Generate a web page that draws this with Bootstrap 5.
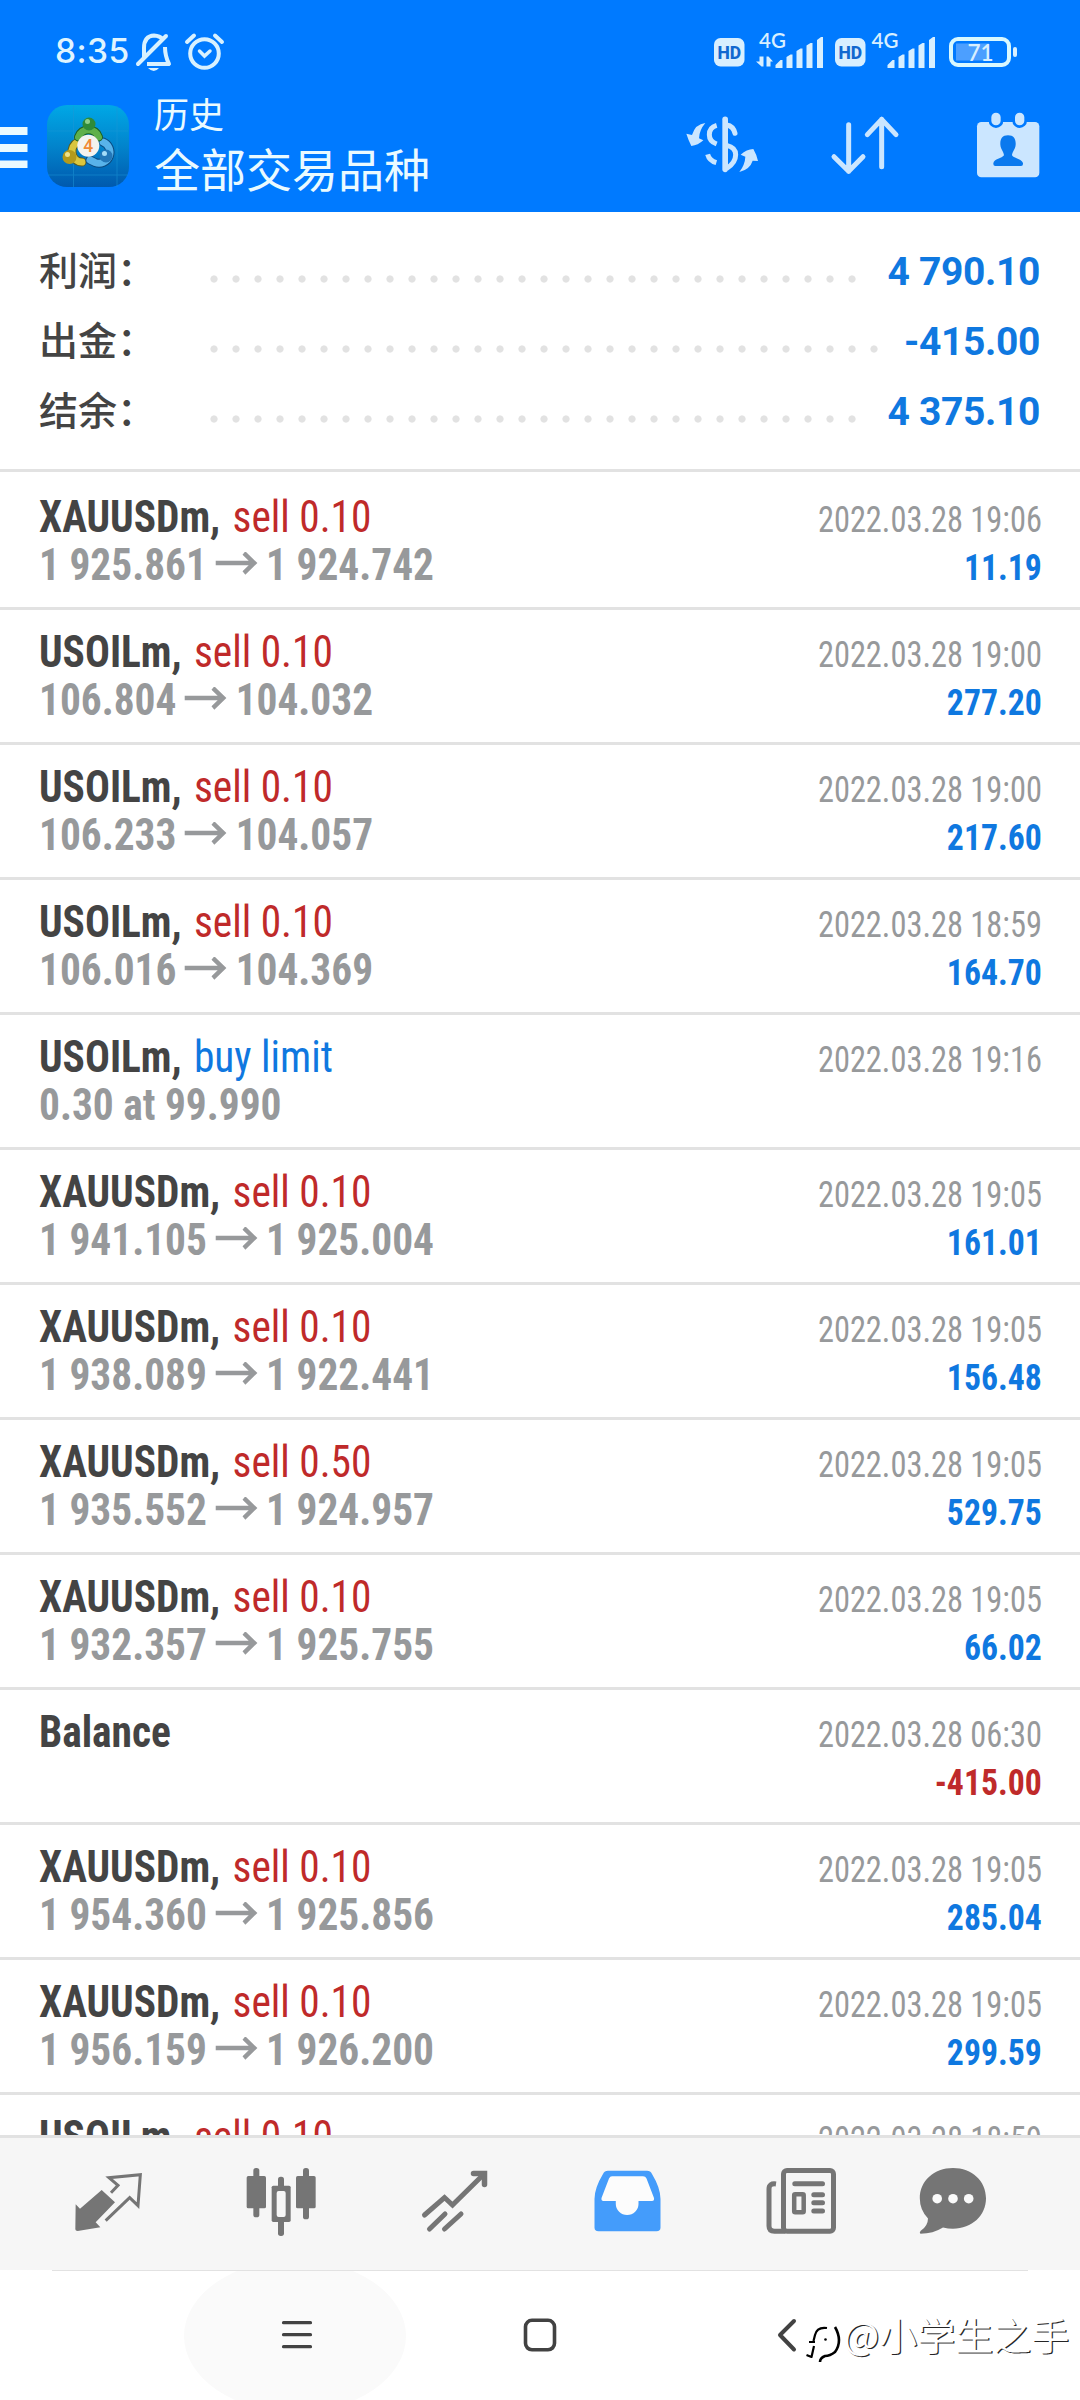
<!DOCTYPE html>
<html lang="zh-CN">
<head>
<meta charset="utf-8">
<meta name="viewport" content="width=device-width, initial-scale=1">
<title>历史</title>
<link href="https://cdn.jsdelivr.net/npm/bootstrap@5.3.0/dist/css/bootstrap.min.css" rel="stylesheet">
<style>
  body { font-family: "Roboto Condensed", Roboto, "Noto Sans CJK SC", sans-serif; background: #fff; }
  svg { display: block; flex: none; }
  .phone { width: 1080px; height: 2400px; }
  .topbar { height: 212px; background: #007aff; color: #eafaff; }
  .status { height: 88px; padding: 0 60px 0 55px; }
  .clock { font: 500 33.500px/1 Inter, sans-serif; color: #dff4ff; letter-spacing: .4px; width: 76px; margin-top: 35px; white-space: nowrap; }
  .appbar { height: 124px; }
  .titles { font-family: "Noto Sans CJK SC", sans-serif; margin: -3px 0 0 13px; font-weight: 400; }
  .title-sm { font-size: 35px; line-height: 56px; }
  .title-lg { font-size: 46px; line-height: 52px; }
  .summary { height: 260px; border-bottom: 3px solid #e2e2e2; padding: 23px 40px 0 39px; }
  .sum-row { height: 70px; }
  .sum-label { width: 163.5px; font: 500 39px/66px "Noto Sans CJK SC", sans-serif; color: #444; padding-bottom: 4px; }
  .leader { height: 8px; margin-top: 17px; margin-right: 24px;
    background: radial-gradient(circle at 11px 4px, #e2e2e2 3.2px, transparent 4px) 0 0 / 22px 8px repeat-x; }
  .sum-val { font: 700 39px/68px Roboto, sans-serif; letter-spacing: -.35px; color: #0f78e0; padding-top: 3px; }
  .deals { padding-top: 3px; }
  .deal { height: 135px; border-bottom: 3px solid #e2e2e2; padding: 18px 38px 0 39px; white-space: nowrap; }
  .deal-line { height: 48px; line-height: 48px; }
  .deal-main { font-size: 44px; transform: scaleX(.94); transform-origin: 0 0; }
  .deal-side { padding-top: 3px; font-size: 36px; }
  .deal-side > div { transform-origin: 100% 0; }
  .sym { font-weight: 700; color: #444; }
  .side { margin-left: 3px; }
  .c-sell { color: #bf2a2a; }
  .c-buy { color: #0f78e0; }
  .prices { font-weight: 700; color: #97999b; }
  .stamp { color: #97999b; transform: scaleX(.9); }
  .gain { font-weight: 700; transform: scaleX(.937); }
  .tabs { height: 135px; background: #f6f6f6; border-top: 3px solid #e2e2e2; padding-left: 22px; }
  .tab { width: 173px; }
  .tab:last-child { width: 131px; }
  .sysnav { height: 130px; background: #fff; }
</style>
</head>
<body>
<div class="phone d-flex flex-column overflow-hidden mx-auto">
  <header class="topbar flex-shrink-0">
    <div class="status d-flex">
      <span class="clock">8:35</span>
      <svg width="100" height="88" viewBox="131 0 100 88" fill="none" stroke="#d8f1ff" stroke-width="4">
        <path d="M144 57V48Q144 36 154 35.500Q160 36 162.500 39M165 47Q165 56 169 64H147" stroke-linejoin="round"/>
        <path d="M138 64L166 36" stroke-linecap="round"/>
        <path d="M148 68H159Q154 74 148 68Z" fill="#d8f1ff" stroke="none"/>
        <circle cx="204.500" cy="53.500" r="14.300"/>
        <path d="M187 42L194 35.500M222 42L215 35.500" stroke-linecap="round"/>
        <path d="M199.500 51L204.500 56L210 51" stroke-linecap="round" stroke-width="3.500"/>
      </svg>
      <svg class="ms-auto" width="310" height="88" viewBox="710 0 310 88" fill="#d8efff">
        <rect x="714" y="38" width="30.500" height="28.500" rx="6.500"/>
        <text x="729.300" y="58.500" text-anchor="middle" font-family="Roboto" font-weight="800" font-size="17.500" fill="#1268cf">HD</text>
        <text x="759" y="48" font-family="Lato" font-weight="600" font-size="20.500">4G</text>
        <path d="M759.500 56.500h4v10h-2l-5.500-5h3.500zM770.500 66.500h-4v-10h2l4.500 5h-2.500z"/>
        <path id="bars" d="M775.500 68v-3l5-5h2v8zM786.500 68V57l4-2.500h2V68zM796.500 68V51l4-2.500h2V68zM806.500 68V45.500l4-2.500h2V68zM817 68V40l4-3h2V68z"/>
        <rect x="835" y="38" width="30.500" height="28.500" rx="6.500"/>
        <text x="850.300" y="58.500" text-anchor="middle" font-family="Roboto" font-weight="800" font-size="17.500" fill="#1268cf">HD</text>
        <text x="871.500" y="48" font-family="Lato" font-weight="600" font-size="20.500">4G</text>
        <use href="#bars" x="112"/>
        <rect x="956" y="43.500" width="33" height="17" fill="#4c9fff"/>
        <rect x="951" y="39" width="58" height="26" rx="7" fill="none" stroke="#d8f8ff" stroke-width="4"/>
        <rect x="1013" y="47" width="4" height="10" rx="2"/>
        <text x="980.500" y="61" text-anchor="middle" font-family="Lato" font-weight="600" font-size="22.500">71</text>
      </svg>
    </div>
    <div class="appbar d-flex">
      <svg width="141" height="124" viewBox="0 88 141 124">
        <defs>
          <linearGradient id="tile" x1="0" y1="0" x2="0" y2="1"><stop offset="0" stop-color="#00a8e6"/><stop offset=".5" stop-color="#0284cc"/><stop offset="1" stop-color="#0059ae"/></linearGradient>
        </defs>
        <path d="M0 127h27.500v8H0zM0 144h27.500v8H0zM0 160.500h27.500v7.500H0z" fill="#eafaff"/>
        <rect x="47" y="105" width="82" height="82" rx="20" fill="url(#tile)"/>
        <path d="M73.500 106V187M117 106V187M48 131H128M48 175H128" stroke="#1d97d6" stroke-width="1" opacity=".5"/>
        <g fill="none" stroke-linecap="round">
          <path d="M78 142A10.500 10.500 0 0 0 82 162" stroke="#5b5c1c" stroke-width="9"/>
          <path d="M78 142A10.500 10.500 0 0 0 82 162" stroke="#d9c63e" stroke-width="7"/>
          <path d="M103 142A11 11 0 0 1 95 162.500L90 160" stroke="#0b4b80" stroke-width="9"/>
          <path d="M103 142A11 11 0 0 1 95 162.500L90 160" stroke="#58b3ea" stroke-width="7"/>
          <path d="M78.500 137A10.500 10.500 0 0 1 98.500 137" stroke="#1c5f22" stroke-width="9"/>
          <path d="M78.500 137A10.500 10.500 0 0 1 98.500 137" stroke="#5fb04a" stroke-width="7"/>
        </g>
        <circle cx="89" cy="124" r="6.500" fill="#2f8b38"/><circle cx="87.500" cy="121.500" r="2.500" fill="#8fd08a"/>
        <circle cx="69.500" cy="157" r="7" fill="#b39a1c"/><circle cx="67.500" cy="154.500" r="2.500" fill="#efe28a"/>
        <circle cx="106" cy="156" r="6.500" fill="#2377b8"/><circle cx="104.500" cy="153.500" r="2.500" fill="#a5dcf8"/>
        <circle cx="88.300" cy="145.700" r="11" fill="#f3f3ef"/>
        <text x="88.300" y="152" text-anchor="middle" font-family="Roboto" font-weight="500" font-size="17.500" fill="#f08a35">4</text>
      </svg>
      <div class="titles">
        <div class="title-sm">历史</div>
        <div class="title-lg">全部交易品种</div>
      </div>
      <svg class="ms-auto" width="100" height="124" viewBox="0 -36 300 372" fill="none" stroke="#cbe6ff" stroke-width="15">
        <path d="M135.500 58V208" stroke-width="17" stroke-linecap="round"/>
        <path d="M110 76Q88 82 88 104Q88 124 110 132"/>
        <path d="M140 75Q160 78 165 100" stroke-linecap="round"/>
        <path d="M140 136Q167 142 167 164Q167 188 140 205"/>
        <path d="M83 163Q88 182 109 188" stroke-linecap="butt"/>
        <g fill="#cbe6ff" stroke="none">
          <path d="M76 69Q46 72 36 105L19 101Q25 120 34 138Q54 136 70 121L57 115Q58 90 76 69Z"/>
          <path d="M178 216Q210 208 218 182L234 183Q230 164 220 147Q200 148 182 164L196 170Q195 194 178 216Z"/>
        </g>
      </svg>
      <svg width="190" height="124" viewBox="420 264 570 372" fill="none" stroke="#cbe6ff" stroke-width="15" stroke-linecap="round" stroke-linejoin="round">
        <path d="M626 374V514M582 470L626 514L669 470M725 500V358M682 404L725 358L768 404"/>
      </svg>
      <svg width="110" height="124" viewBox="990 264 330 372" fill="#cbe6ff">
        <rect x="1011" y="366" width="187" height="166" rx="13"/>
        <g stroke="#007aff" stroke-width="8"><rect x="1050" y="334" width="36" height="46" rx="18"/><rect x="1121" y="334" width="36" height="46" rx="18"/></g>
        <path d="M1104 406C1086 406 1080 418 1081 434C1082 448 1092 456 1092 466C1086 476 1062 476 1060 490V492Q1060 498 1066 498H1143Q1149 498 1149 492V490C1146 476 1122 476 1116 466C1116 456 1126 448 1127 434C1128 418 1122 406 1104 406Z" fill="#0a79ee"/>
      </svg>
    </div>
  </header>

  <section class="summary flex-shrink-0">
    <div class="sum-row d-flex align-items-center"><span class="sum-label">利润：</span><span class="leader flex-grow-1"></span><span class="sum-val">4 790.10</span></div>
    <div class="sum-row d-flex align-items-center"><span class="sum-label">出金：</span><span class="leader flex-grow-1"></span><span class="sum-val">-415.00</span></div>
    <div class="sum-row d-flex align-items-center"><span class="sum-label">结余：</span><span class="leader flex-grow-1"></span><span class="sum-val">4 375.10</span></div>
  </section>

  <main class="deals flex-grow-1 overflow-hidden" id="deals" style="min-height:0"></main>

  <nav class="tabs d-flex flex-shrink-0">
    <a class="tab d-flex justify-content-center" href="#" aria-label="行情">
      <svg width="80" height="132" viewBox="28 -36 240 396">
        <path d="M48 163L61 176L126 120L166 157L108 217L122 232L54 243Q47 243 47 238Z" fill="#757575"/>
        <path d="M138 212L210 143L235 167L242 74L148 83L175 106L154 128" fill="none" stroke="#757575" stroke-width="9"/>
      </svg>
    </a>
    <a class="tab d-flex justify-content-center" href="#" aria-label="图表">
      <svg width="80" height="132" viewBox="546 -36 240 396" fill="#757575">
        <rect x="580" y="54" width="18" height="148" rx="8"/><rect x="560" y="78" width="58" height="97" rx="5"/>
        <rect x="654" y="80" width="18" height="178" rx="8"/><rect x="635" y="107" width="57" height="109" rx="5"/><rect x="650" y="123" width="27" height="78" rx="6" fill="#f6f6f6"/>
        <rect x="729" y="54" width="18" height="154" rx="8"/><rect x="708" y="78" width="59" height="97" rx="5"/>
      </svg>
    </a>
    <a class="tab d-flex justify-content-center" href="#" aria-label="交易">
      <svg width="80" height="132" viewBox="414.500 2138 80 132" fill="none" stroke="#757575" stroke-width="5" stroke-linecap="round">
        <path d="M424 2215L444 2197.500L452 2205L483.500 2174"/>
        <path d="M473 2173.500H484V2184.500" stroke-width="5.500"/>
        <path d="M429 2229L444.500 2214M444 2229L460.500 2214"/>
      </svg>
    </a>
    <a class="tab d-flex justify-content-center" href="#" aria-label="历史">
      <svg width="80" height="132" viewBox="588 2138 80 132" fill="#449cfb">
        <path d="M608 2170.700H647Q650.500 2170.700 652 2174Q660.500 2188 660.500 2199V2227.500Q660.500 2231.300 656.500 2231.300H598.500Q594.500 2231.300 594.500 2227.500V2199Q594.500 2188 603 2174Q604.500 2170.700 608 2170.700Z"/>
        <path d="M612 2176.300Q610 2176.300 609 2178.500L601.500 2198Q601 2201 603.500 2201H615.800V2204A11.350 11 0 0 0 638.500 2204V2201H652Q654.500 2201 654 2198L646.500 2178.500Q645.500 2176.300 643 2176.300Z" fill="#fcfcfc"/>
      </svg>
    </a>
    <a class="tab d-flex justify-content-center" href="#" aria-label="新闻">
      <svg width="80" height="132" viewBox="760.500 2138 80 132" fill="none" stroke="#757575" stroke-width="5">
        <rect x="783" y="2170.500" width="50" height="60.700" rx="3.500"/>
        <path d="M775.500 2184Q768.500 2183 768.500 2189V2226Q768.500 2231.200 774 2231.200H785"/>
        <path d="M794.300 2183.700H822M813.300 2194.700H822M813.300 2202.700H822M813.300 2211H822" stroke-linecap="round"/>
        <rect x="793.700" y="2194.200" width="9.500" height="18" rx="1" stroke-width="4.500"/>
      </svg>
    </a>
    <a class="tab d-flex justify-content-center" href="#" aria-label="消息">
      <svg width="80" height="132" viewBox="913 2138 80 132" fill="#757575">
        <path d="M953 2168C972 2168 986 2181 986 2198.300S972 2228.700 953 2228.700Q948 2228.700 943 2227.500Q933 2233.700 920.500 2233.700Q919 2233 920.500 2231Q928 2226 928 2218.500Q919.800 2210 919.800 2198.300C919.800 2181 934 2168 953 2168Z"/>
        <g fill="#fafafa"><circle cx="937.200" cy="2198.700" r="4.800"/><circle cx="953" cy="2198.700" r="4.800"/><circle cx="968.700" cy="2198.700" r="4.800"/></g>
      </svg>
    </a>
  </nav>

  <footer class="sysnav flex-shrink-0">
    <svg width="1080" height="130" viewBox="0 2270 1080 130" fill="none" stroke="#424242" stroke-width="3.600" stroke-linecap="round" stroke-linejoin="round">
      <ellipse cx="295" cy="2336" rx="111" ry="76" fill="#fafafa" stroke="none"/>
      <path d="M52 2270.500H1028" stroke="#e2e2e2" stroke-width="1" stroke-linecap="butt"/>
      <path d="M283.500 2322.700H310.500M283.500 2334.700H310.500M283.500 2346.700H310.500" stroke-width="3.200"/>
      <rect x="525.500" y="2320.300" width="29" height="29.500" rx="6.500"/>
      <path d="M794 2321L780 2335L794 2349.500" stroke-width="4"/>
      <g stroke="none" font-family="Noto Sans CJK SC" font-size="38" font-weight="350">
        <text x="845" y="2351" fill="#000" opacity=".85">@小学生之手</text>
        <text x="843.800" y="2349.800" fill="#fff">@小学生之手</text>
      </g>
      <g stroke="#000" stroke-linecap="butt">
        <path d="M827 2328Q817 2326.500 815 2335L813.500 2341M809 2342H815M814 2346L811.500 2357L806.500 2355" stroke-width="2.200"/>
        <path d="M835 2327Q843 2341 835 2352Q830 2356 825 2356Q820 2358 820 2362" stroke-width="2.600"/>
        <circle cx="825.500" cy="2339.500" r="1.300" fill="#000" stroke="none"/>
      </g>
    </svg>
  </footer>
</div>
<script>
  // symbol, side label, price from, price to, time, result
  const deals = [
    ["XAUUSDm", "sell 0.10", "1 925.861", "1 924.742", "19:06", "11.19"],
    ["USOILm", "sell 0.10", "106.804", "104.032", "19:00", "277.20"],
    ["USOILm", "sell 0.10", "106.233", "104.057", "19:00", "217.60"],
    ["USOILm", "sell 0.10", "106.016", "104.369", "18:59", "164.70"],
    ["USOILm", "buy limit", "0.30 at 99.990", "", "19:16", ""],
    ["XAUUSDm", "sell 0.10", "1 941.105", "1 925.004", "19:05", "161.01"],
    ["XAUUSDm", "sell 0.10", "1 938.089", "1 922.441", "19:05", "156.48"],
    ["XAUUSDm", "sell 0.50", "1 935.552", "1 924.957", "19:05", "529.75"],
    ["XAUUSDm", "sell 0.10", "1 932.357", "1 925.755", "19:05", "66.02"],
    ["Balance", "", "", "", "06:30", "-415.00"],
    ["XAUUSDm", "sell 0.10", "1 954.360", "1 925.856", "19:05", "285.04"],
    ["XAUUSDm", "sell 0.10", "1 956.159", "1 926.200", "19:05", "299.59"],
    ["USOILm", "sell 0.10", "", "", "18:59", ""]
  ];
  const arrow = '<svg class="ms-2 me-2" width="47" height="26" viewBox="0 0 47 26" fill="none" stroke="#97999b" stroke-width="4.500"><path d="M1 11H43M31 1L42 11L31 21"/></svg>';
  document.getElementById("deals").innerHTML = deals.map(([sym, side, from, to, time, gain]) => `
    <div class="deal d-flex justify-content-between">
      <div class="deal-main">
        <div class="deal-line"><span class="sym">${sym}${side ? "," : ""}</span> <span class="side ${side[0] === "b" ? "c-buy" : "c-sell"}">${side}</span></div>
        <div class="deal-line prices d-flex align-items-center"><span>${from}</span>${to ? arrow + `<span>${to}</span>` : ""}</div>
      </div>
      <div class="deal-side text-end">
        <div class="deal-line stamp">2022.03.28 ${time}</div>
        <div class="deal-line gain ${gain[0] === "-" ? "c-sell" : "c-buy"}">${gain}</div>
      </div>
    </div>`).join("");
</script>
<script src="https://cdn.jsdelivr.net/npm/bootstrap@5.3.0/dist/js/bootstrap.bundle.min.js"></script>
</body>
</html>
